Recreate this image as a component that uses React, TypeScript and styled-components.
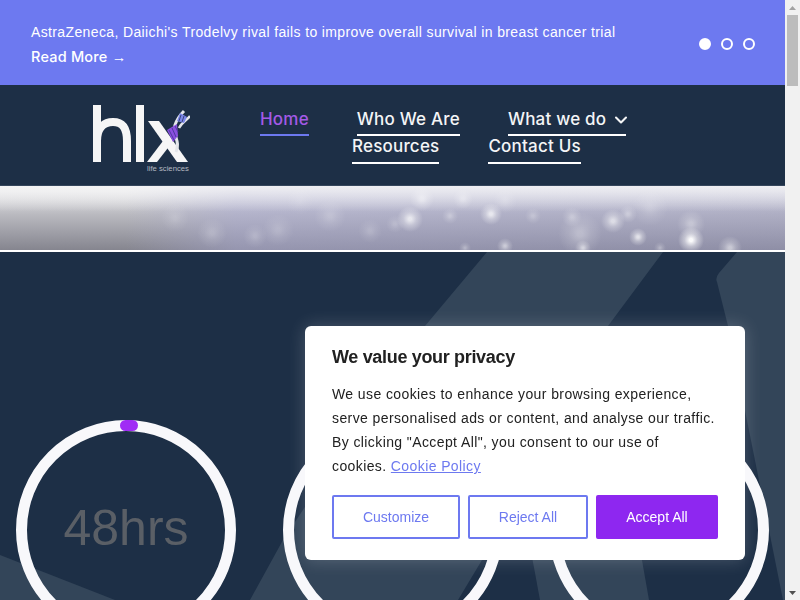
import styled, { createGlobalStyle } from 'styled-components';
import { ChevronDown } from 'lucide-react';

const GlobalStyle = createGlobalStyle`
  html, body {
    margin: 0;
    padding: 0;
    height: 100%;
    overflow: hidden;
    background: #fff;
  }
  body {
    font-family: "Liberation Sans", Arial, sans-serif;
  }
  * {
    box-sizing: border-box;
  }
`;

const Window = styled.div`
  display: flex;
  height: 600px;
  overflow: hidden;
`;
const Page = styled.div`
  display: flex;
  flex-direction: column;
  flex: 1;
  min-width: 0;
`;

const Scrollbar = styled.div`
  display: flex;
  flex-direction: column;
  align-items: center;
  flex: none;
  width: 15px;
  background: #f1f1f1;
`;
const ScrollArrow = styled.svg`
  display: block;
  width: 15px;
  height: 15px;
  flex: none;
`;
const ScrollThumb = styled.div`
  width: 11px;
  height: 71px;
  background: #bcbcbc;
`;
const ScrollTrack = styled.div`
  flex: 1;
`;

const TopBar = styled.div`
  display: flex;
  align-items: center;
  justify-content: space-between;
  height: 85px;
  padding: 3px 30px 0 31px;
  background: #6d79f0;
  color: #fff;
`;
const NewsText = styled.div`
  font-size: 14px;
  line-height: 20px;
  letter-spacing: 0.37px;
`;
const ReadMore = styled.a`
  display: block;
  margin-top: 5px;
  font-family: "Inter", sans-serif;
  font-size: 14.5px;
  font-weight: 500;
  letter-spacing: 0.2px;
  line-height: 20px;
  color: #fff;
`;
const ReadMoreArrow = styled.span`
  font-family: "Liberation Sans", sans-serif;
  font-weight: 400;
`;
const Dots = styled.div`
  display: flex;
  gap: 10px;
`;
const Dot = styled.span<{ $active?: boolean }>`
  width: 12px;
  height: 12px;
  border-radius: 50%;
  border: 2px solid #fff;
  background: ${({ $active }) => ($active ? '#fff' : 'transparent')};
`;

const Header = styled.header`
  display: flex;
  height: 101px;
  flex: none;
  padding: 20px 0 0 93px;
  background: #1d2f46;
  border-bottom: 1px solid #35465c;
`;
const Logo = styled.svg`
  display: block;
  width: 97px;
  height: 67px;
  flex: none;
`;
const Nav = styled.nav`
  display: flex;
  flex-direction: column;
  margin-left: 70px;
`;
const NavRow = styled.div<{ $indent?: number; $gap: number }>`
  display: flex;
  gap: ${({ $gap }) => $gap}px;
  height: 27px;
  margin-left: ${({ $indent }) => $indent ?? 0}px;
`;
const NavLink = styled.a<{ $active?: boolean; $height: number }>`
  display: flex;
  align-items: flex-start;
  gap: 5px;
  height: ${({ $height }) => $height}px;
  font-family: "Inter", sans-serif;
  font-size: 17px;
  line-height: 28px;
  font-weight: 500;
  letter-spacing: 0.2px;
  color: ${({ $active }) => ($active ? '#a45ae6' : '#f4f5f6')};
  border-bottom: 2px solid ${({ $active }) => ($active ? '#6d79f0' : '#fff')};
`;
const NavChevron = styled(ChevronDown)`
  margin: 5px -5px 0 0;
`;

const Banner = styled.svg`
  display: block;
  width: 100%;
  height: 64px;
  flex: none;
`;

const Stats = styled.section`
  position: relative;
  flex: 1;
  overflow: hidden;
  margin-top: 2px;
  padding: 168px 16px 0;
  background: #1d2f46;
`;
const Shapes = styled.svg`
  position: absolute;
  top: 0;
  left: 0;
  width: 785px;
  height: 348px;
`;
const Rings = styled.div`
  position: relative;
  display: flex;
  justify-content: space-between;
`;
const Ring = styled.div`
  position: relative;
  display: flex;
  align-items: center;
  justify-content: center;
  flex: none;
  width: 220px;
  height: 220px;
  padding-bottom: 4px;
  border: 11px solid #f8f8fb;
  border-radius: 50%;
`;
const RingDot = styled.span`
  position: absolute;
  top: -11px;
  left: 93px;
  width: 18px;
  height: 11px;
  border-radius: 6px;
  background: #a02cf5;
`;
const RingValue = styled.div`
  font-size: 50px;
  color: #5a5f66;
`;

const CookieDialog = styled.div`
  position: fixed;
  right: 55px;
  bottom: 40px;
  width: 440px;
  height: 234px;
  padding: 20px 27px;
  background: #fff;
  border-radius: 6px;
  box-shadow: 0 0 18px rgba(255, 255, 255, 0.2);
  color: #212121;
`;
const CookieTitle = styled.div`
  font-size: 18px;
  font-weight: 700;
  letter-spacing: -0.33px;
  line-height: 23px;
  margin-bottom: 13px;
`;
const CookieText = styled.p`
  max-width: 385px;
  margin: 0 0 17px;
  font-size: 14px;
  line-height: 24px;
  letter-spacing: 0.4px;
`;
const PolicyLink = styled.a`
  color: #6d79f0;
  text-decoration: underline;
`;
const Buttons = styled.div`
  display: flex;
  gap: 8px;
`;
const CookieButton = styled.button<{ $primary?: boolean; $width: number }>`
  width: ${({ $width }) => $width}px;
  height: 44px;
  padding: 0;
  font-family: inherit;
  font-size: 14px;
  border-radius: 2px;
  border: 2px solid ${({ $primary }) => ($primary ? '#8e27f0' : '#6d79f0')};
  background: ${({ $primary }) => ($primary ? '#8e27f0' : '#fff')};
  color: ${({ $primary }) => ($primary ? '#fff' : '#6d79f0')};
`;

// cx, cy, r, opacity of the out-of-focus lights in the banner photo
const bokeh = [
  [175, 32, 14, 0.16], [212, 47, 15, 0.2], [255, 50, 12, 0.2], [278, 44, 16, 0.18], [330, 30, 16, 0.2],
  [300, 15, 14, 0.1], [370, 45, 12, 0.18], [395, 38, 9, 0.2], [422, 13, 12, 0.45], [410, 33, 13, 0.7],
  [450, 30, 8, 0.3], [463, 13, 10, 0.35], [491, 28, 11, 0.7], [505, 15, 12, 0.2], [533, 30, 8, 0.25],
  [572, 31, 10, 0.3], [580, 48, 22, 0.3], [613, 35, 12, 0.6], [638, 51, 9, 0.7], [628, 28, 9, 0.35],
  [650, 22, 18, 0.2], [691, 54, 13, 0.95], [691, 38, 14, 0.35], [505, 60, 8, 0.5], [583, 62, 8, 0.55],
  [730, 62, 12, 0.5], [660, 62, 6, 0.3], [465, 62, 6, 0.3],
];

const App = () => {
  return (
    <Window>
      <GlobalStyle />
      <Page>
        <TopBar>
          <div>
            <NewsText>AstraZeneca, Daiichi's Trodelvy rival fails to improve overall survival in breast cancer trial</NewsText>
            <ReadMore>Read More <ReadMoreArrow>→</ReadMoreArrow></ReadMore>
          </div>
          <Dots>
            <Dot $active />
            <Dot />
            <Dot />
          </Dots>
        </TopBar>
        <Header>
          <Logo viewBox="0 0 97 67">
            <g fill="none" stroke="#f6f6f6" strokeWidth="8">
              <path d="M4 0V57" />
              <path d="M4 36C4 22 12 17 20 17C30 17 34 24 34 36V57" />
              <path d="M47 0V57" />
            </g>
            <path d="M55 16H66L95 57H84Z" fill="#f6f6f6" />
            <path d="M54 57L73 32L78 39L64 57Z" fill="#f6f6f6" />
            <path d="M83 47C88 36 79 30 82 20C84 14 87 10 91 6" fill="none" stroke="#e4e6ea" strokeWidth="3" />
            <path d="M97 11C93 16 89 17 86 23" fill="none" stroke="#e4e6ea" strokeWidth="2.5" />
            <path d="M74 25L84 19L85 31L80 37Z" fill="#8a4fe0" />
            <path d="M76 25L81 35M79 23L83 32M82 21L85 27" stroke="#4d3a9e" strokeWidth="1" />
            <path d="M87 8L94 12L91 18L84 16Z" fill="#7c86e8" />
            <path d="M88 10L86 16M91 11L89 17" stroke="#39467f" strokeWidth="1" />
            <text x="54" y="65.5" fontFamily="Liberation Sans" fontSize="7.7" fill="#b5bac1">life sciences</text>
          </Logo>
          <Nav>
            <NavRow $gap={48}>
              <NavLink $active $height={31}>Home</NavLink>
              <NavLink $height={31}>Who We Are</NavLink>
              <NavLink $height={31}>What we do <NavChevron size={20} strokeWidth={2.5} /></NavLink>
            </NavRow>
            <NavRow $indent={92} $gap={49}>
              <NavLink $height={32}>Resources</NavLink>
              <NavLink $height={32}>Contact Us</NavLink>
            </NavRow>
          </Nav>
        </Header>
        <Banner viewBox="0 0 785 64" preserveAspectRatio="none">
          <defs>
            <linearGradient id="fade" x1="0" y1="0" x2="0" y2="1">
              <stop offset="0" stopColor="#f2f2f3" />
              <stop offset="0.45" stopColor="#b9b9bf" />
              <stop offset="1" stopColor="#85858f" />
            </linearGradient>
            <linearGradient id="tint" x1="0" y1="0" x2="1" y2="0">
              <stop offset="0.16" stopColor="#a9a9d6" stopOpacity="0" />
              <stop offset="0.3" stopColor="#a9a9d6" stopOpacity="0.45" />
              <stop offset="1" stopColor="#9c9cc8" stopOpacity="0.4" />
            </linearGradient>
            <linearGradient id="sheen" x1="0" y1="0" x2="0" y2="1">
              <stop offset="0" stopColor="#f4f4f5" stopOpacity="0.85" />
              <stop offset="0.4" stopColor="#f4f4f5" stopOpacity="0" />
            </linearGradient>
            <radialGradient id="glow">
              <stop offset="0.12" stopColor="#fff" />
              <stop offset="0.5" stopColor="#fff" stopOpacity="0.45" />
              <stop offset="1" stopColor="#fff" stopOpacity="0" />
            </radialGradient>
          </defs>
          <rect width="785" height="64" fill="url(#fade)" />
          <rect width="785" height="64" fill="url(#tint)" />
          <rect width="785" height="64" fill="url(#sheen)" />
          {bokeh.map(([cx, cy, r, o]) => (
            <circle key={`${cx}-${cy}`} cx={cx} cy={cy} r={r} fill="url(#glow)" opacity={o} />
          ))}
        </Banner>
        <Stats>
          <Shapes viewBox="0 0 785 348">
            <g fill="#334559">
              <path d="M487 0H663L608 74L482 308L458 348H250L283 288L425 74Z" />
              <path d="M520 240H630L649 348H540Z" />
              <path d="M737 0H785V348H783L728 74L717 30Q715 26 719 21Z" />
              <path d="M0 303L115 348H0Z" />
            </g>
          </Shapes>
          <Rings>
            <Ring>
              <RingDot />
              <RingValue>48hrs</RingValue>
            </Ring>
            <Ring>
              <RingDot />
            </Ring>
            <Ring>
              <RingDot />
            </Ring>
          </Rings>
        </Stats>
        <CookieDialog>
          <CookieTitle>We value your privacy</CookieTitle>
          <CookieText>
            We use cookies to enhance your browsing experience, serve personalised ads or content, and analyse our traffic. By clicking "Accept All", you consent to our use of cookies. <PolicyLink>Cookie Policy</PolicyLink>
          </CookieText>
          <Buttons>
            <CookieButton $width={128}>Customize</CookieButton>
            <CookieButton $width={120}>Reject All</CookieButton>
            <CookieButton $width={122} $primary>Accept All</CookieButton>
          </Buttons>
        </CookieDialog>
      </Page>
      <Scrollbar>
        <ScrollArrow viewBox="0 0 15 15">
          <path d="M4 10L7.5 6L11 10Z" fill="#a3a3a3" />
        </ScrollArrow>
        <ScrollThumb />
        <ScrollTrack />
        <ScrollArrow viewBox="0 0 15 15">
          <path d="M4 6L7.5 10L11 6Z" fill="#505050" />
        </ScrollArrow>
      </Scrollbar>
    </Window>
  );
};

export default App;
